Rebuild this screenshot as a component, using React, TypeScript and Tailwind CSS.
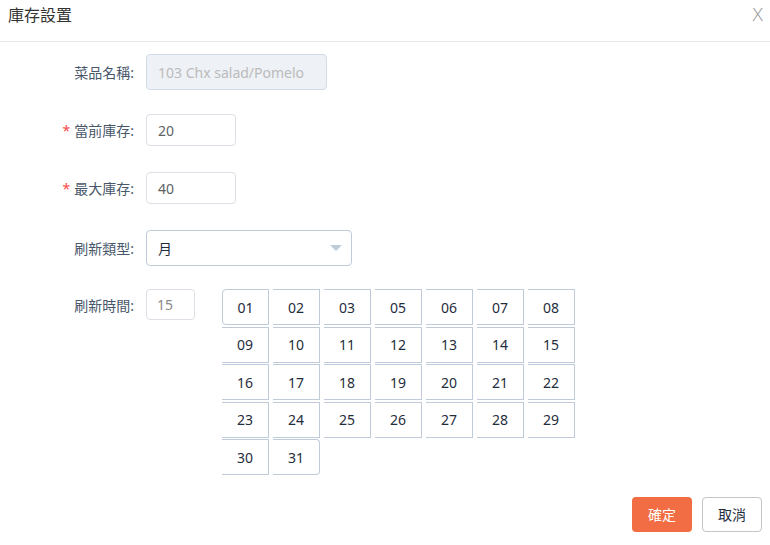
const FONT = '"Noto Sans", "Noto Sans CJK TC", sans-serif';

const DAYS = [
  '01', '02', '03', '05', '06', '07', '08',
  '09', '10', '11', '12', '13', '14', '15',
  '16', '17', '18', '19', '20', '21', '22',
  '23', '24', '25', '26', '27', '28', '29',
  '30', '31',
];

function Label({ text, required }: { text: string; required?: boolean }) {
  return (
    <div className="w-[134px] shrink-0 text-right text-[14px] text-[#48576a]">
      {required && <span className="text-[#ff4949] mr-[4px]">*</span>}
      {text}
    </div>
  );
}

export default function App() {
  return (
    <div className="w-[770px] h-[545px] bg-white flex flex-col" style={{ fontFamily: FONT }}>
      {/* header */}
      <div className="h-[42px] shrink-0 border-b border-[#e6e6e6] flex items-center justify-between pl-[8px] pr-[7px]">
        <span className="text-[16px] text-[#333] -mt-[12px]">庫存設置</span>
        <span className="text-[19px] font-light text-[#a0a0a0] -mt-[12px] leading-none">X</span>
      </div>

      <div className="flex flex-col">
        {/* 菜品名稱 */}
        <div className="flex items-center mt-[12px] h-[36px] gap-[12px]">
          <Label text="菜品名稱:" />
          <div className="w-[181px] h-[36px] rounded-[4px] border border-[#d1dbe5] bg-[#eef1f6] flex items-center px-[11px] text-[14px] text-[#bbbbbb]">
            103 Chx salad/Pomelo
          </div>
        </div>

        {/* 當前庫存 */}
        <div className="flex items-center mt-[24px] h-[32px] gap-[12px]">
          <Label text="當前庫存:" required />
          <div className="w-[90px] h-[32px] rounded-[4px] border border-[#dcdfe6] flex items-center px-[11px] text-[14px] text-[#606266]">
            20
          </div>
        </div>

        {/* 最大庫存 */}
        <div className="flex items-center mt-[26px] h-[32px] gap-[12px]">
          <Label text="最大庫存:" required />
          <div className="w-[90px] h-[32px] rounded-[4px] border border-[#dcdfe6] flex items-center px-[11px] text-[14px] text-[#606266]">
            40
          </div>
        </div>

        {/* 刷新類型 */}
        <div className="flex items-center mt-[26px] h-[36px] gap-[12px]">
          <Label text="刷新類型:" />
          <div className="w-[206px] h-[36px] rounded-[4px] border border-[#bfcbd9] flex items-center justify-between pl-[11px] pr-[8px] text-[14px] text-[#1f2d3d]">
            <span>月</span>
            <svg width="14" height="8" viewBox="0 0 14 8">
              <path d="M1 1 L13 1 L7 7 Z" fill="#bfcbd9" />
            </svg>
          </div>
        </div>

        {/* 刷新時間 */}
        <div className="flex items-start mt-[23px] gap-[12px]">
          <div className="h-[32px] flex items-center">
            <Label text="刷新時間:" />
          </div>
          <div className="w-[49px] h-[31px] rounded-[4px] border border-[#dcdfe6] flex items-center px-[10px] text-[14px] text-[#8a8a8a]">
            15
          </div>
          <div className="w-[360px] ml-[15px] flex flex-wrap gap-x-[4px] gap-y-[1.5px]">
            {DAYS.map((d, i) => (
              <div
                key={d}
                className={`w-[47px] h-[36px] flex items-center justify-center border-y border-r border-[#bfcbd9] text-[14px] text-[#1f2d3d] ${
                  i === 0 ? 'border-l rounded-l-[4px]' : ''
                } ${i === DAYS.length - 1 ? 'rounded-r-[4px]' : ''}`}
              >
                {d}
              </div>
            ))}
          </div>
        </div>
      </div>

      {/* footer */}
      <div className="flex justify-end gap-[10px] pr-[8px] mt-[22px]">
        <button className="w-[60px] h-[35px] rounded-[4px] bg-[#f26d43] text-white text-[14px]">確定</button>
        <button className="w-[60px] h-[35px] rounded-[4px] border border-[#c4c4c4] bg-white text-[#1f2d3d] text-[14px]">取消</button>
      </div>
    </div>
  );
}
